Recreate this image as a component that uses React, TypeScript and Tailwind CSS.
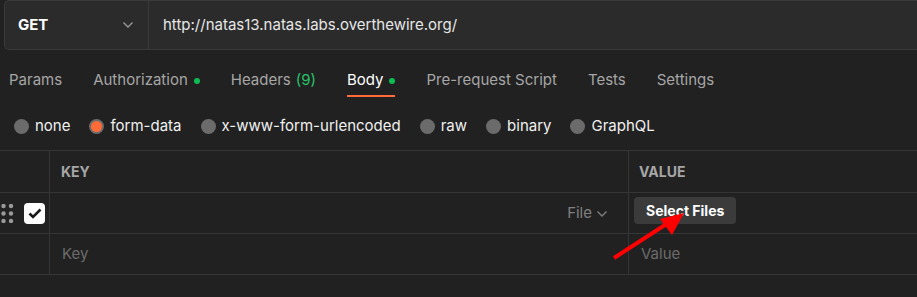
import React from "react";

const tabs = [
  { label: "Params" },
  { label: "Authorization", dot: true },
  { label: "Headers", count: "(9)" },
  { label: "Body", dot: true, active: true },
  { label: "Pre-request Script" },
  { label: "Tests" },
  { label: "Settings" },
];

const bodyTypes = ["none", "form-data", "x-www-form-urlencoded", "raw", "binary", "GraphQL"];

function Chevron({ className }: { className?: string }) {
  return (
    <svg className={className} width="12" height="8" viewBox="0 0 12 8" fill="none">
      <path d="M1.5 1.5 L6 6 L10.5 1.5" stroke="currentColor" strokeWidth="1.3" />
    </svg>
  );
}

function DragHandle() {
  return (
    <svg width="13" height="19" viewBox="0 0 13 19">
      {[2, 9.5, 17].map((y) =>
        [2.5, 10].map((x) => <circle key={`${x}-${y}`} cx={x} cy={y} r="2.2" fill="#9a9a9a" />)
      )}
    </svg>
  );
}

export default function App() {
  return (
    <div
      className="h-[297px] w-[917px] overflow-hidden bg-[#212121] text-white"
      style={{ fontFamily: "Inter, 'Liberation Sans', sans-serif" }}
    >
      {/* barra de URL */}
      <div className="ml-[4px] flex h-[50px] rounded-l-[5px] border border-r-0 border-[#3a3a3a] bg-[#2b2b2b]">
        <div className="flex w-[144px] items-center justify-between border-r border-[#3a3a3a] pl-[13px] pr-[14px]">
          <span className="text-[15px] font-bold">GET</span>
          <Chevron className="text-[#9a9a9a]" />
        </div>
        <div className="flex items-center pl-[14px] text-[15px] text-[#e6e6e6]">
          http://natas13.natas.labs.overthewire.org/
        </div>
      </div>

      {/* pestañas */}
      <div className="flex h-[52px] items-center gap-[31px] pl-[9px] pt-[9px]">
        {tabs.map((t) => (
          <div key={t.label} className="relative flex items-center">
            <span className={`text-[15px] ${t.active ? "text-white" : "text-[#a6a6a6]"}`}>{t.label}</span>
            {t.count && <span className="ml-[5px] text-[15px] text-[#27c46a]">{t.count}</span>}
            {t.dot && <span className="ml-[6px] h-[6px] w-[6px] rounded-full bg-[#0cbb52]" />}
            {t.active && <span className="absolute left-0 right-0 top-[26px] h-[2px] bg-[#ff6c37]" />}
          </div>
        ))}
      </div>

      {/* tipos de body */}
      <div className="flex h-[48px] items-center gap-[19px] pl-[14px]">
        {bodyTypes.map((b) => (
          <div key={b} className="flex items-center gap-[6px]">
            {b === "form-data" ? (
              <span className="flex h-[15px] w-[15px] items-center justify-center rounded-full bg-[#6b6b6b]">
                <span className="h-[11px] w-[11px] rounded-full bg-[#ff6c37]" />
              </span>
            ) : (
              <span className="h-[15px] w-[15px] rounded-full bg-[#6b6b6b]" />
            )}
            <span className="text-[15px] text-[#f0f0f0]">{b}</span>
          </div>
        ))}
      </div>

      {/* tabla */}
      <div className="relative border-t border-[#353535]">
        <div className="flex h-[42px] border-b border-[#353535]">
          <div className="w-[50px] border-r border-[#353535]" />
          <div className="flex w-[579px] items-center border-r border-[#353535] pl-[11px] text-[14px] font-bold text-[#a6a6a6]">
            KEY
          </div>
          <div className="flex flex-1 items-center pl-[10px] text-[14px] font-bold text-[#a6a6a6]">VALUE</div>
        </div>
        <div className="flex h-[41px] border-b border-[#353535]">
          <div className="flex w-[50px] items-center gap-[10px] border-r border-[#353535] pl-[1px]">
            <DragHandle />
            <span className="flex h-[21px] w-[21px] items-center justify-center rounded-[4px] bg-white">
              <svg width="14" height="11" viewBox="0 0 14 11">
                <path d="M1.5 5.5 L5 9 L12.5 1.5" stroke="#1a1a1a" strokeWidth="2.6" fill="none" />
              </svg>
            </span>
          </div>
          <div className="flex w-[579px] items-center justify-end border-r border-[#353535] pr-[20px] text-[15px] text-[#808080]">
            File
            <Chevron className="ml-[4px] mt-[2px]" />
          </div>
          <div className="flex flex-1 items-center pb-[5px] pl-[5px]">
            <span className="rounded-[4px] bg-[#3b3b3b] px-[12px] py-[3px] text-[14px] font-bold">Select Files</span>
          </div>
        </div>
        <div className="flex h-[41px] border-b border-[#353535]">
          <div className="w-[50px] border-r border-[#353535]" />
          <div className="flex w-[579px] items-center border-r border-[#353535] pl-[12px] text-[15px] text-[#6b6b6b]">
            Key
          </div>
          <div className="flex flex-1 items-center pl-[12px] text-[15px] text-[#6b6b6b]">Value</div>
        </div>

        {/* flecha roja encima */}
        <svg className="absolute left-[610px] top-[60px]" width="80" height="52" viewBox="0 0 80 52">
          <path d="M4 47 L58 12" stroke="#ff0000" strokeWidth="4" />
          <polygon points="74,2 50,8 62,24" fill="#ff0000" />
        </svg>
      </div>
    </div>
  );
}
